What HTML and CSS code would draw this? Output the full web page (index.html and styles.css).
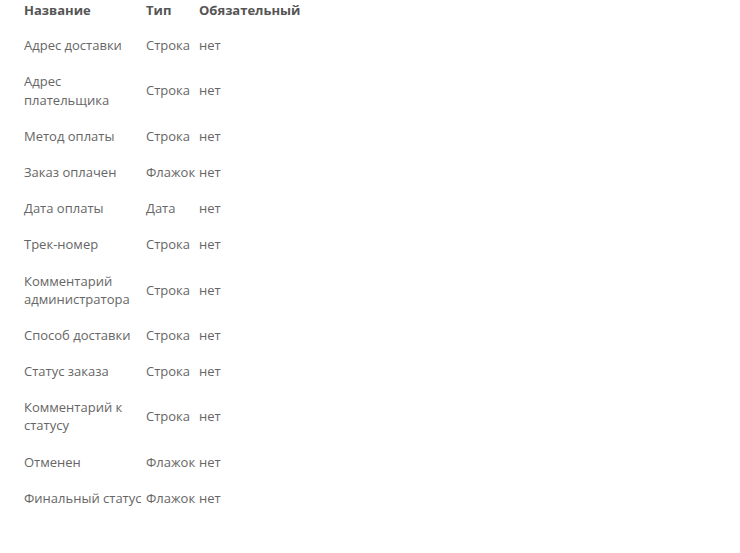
FILE: index.html
```html
<!DOCTYPE html>
<html lang="ru">
<head>
<meta charset="utf-8">
<link rel="stylesheet" href="styles.css">
</head>
<body>
<div class="wrap">
<table class="fields">
<colgroup><col class="c1"><col class="c2"><col class="c3"></colgroup>
<thead>
<tr><th>Название</th><th>Тип</th><th>Обязательный</th></tr>
</thead>
<tbody>
<tr><td>Адрес доставки</td><td>Строка</td><td>нет</td></tr>
<tr><td>Адрес плательщика</td><td>Строка</td><td>нет</td></tr>
<tr><td>Метод оплаты</td><td>Строка</td><td>нет</td></tr>
<tr><td>Заказ оплачен</td><td>Флажок</td><td>нет</td></tr>
<tr><td>Дата оплаты</td><td>Дата</td><td>нет</td></tr>
<tr><td>Трек-номер</td><td>Строка</td><td>нет</td></tr>
<tr><td>Комментарий администратора</td><td>Строка</td><td>нет</td></tr>
<tr><td>Способ доставки</td><td>Строка</td><td>нет</td></tr>
<tr><td>Статус заказа</td><td>Строка</td><td>нет</td></tr>
<tr><td>Комментарий к статусу</td><td>Строка</td><td>нет</td></tr>
<tr><td>Отменен</td><td>Флажок</td><td>нет</td></tr>
<tr><td>Финальный статус</td><td>Флажок</td><td>нет</td></tr>
</tbody>
</table>
</div>
</body>
</html>
```
FILE: styles.css
```css
html, body {
  margin: 0;
  padding: 0;
  background: #fff;
}
.wrap {
  padding: 0 0 0 22px;
  font-family: "Open Sans", "Liberation Sans", sans-serif;
  font-size: 13px;
  line-height: 1.4;
  color: #666;
}
.fields {
  border-collapse: collapse;
  table-layout: fixed;
  width: 330px;
}
.c1 { width: 122px; }
.c2 { width: 53px; }
.c3 { width: 155px; }
.fields th {
  text-align: left;
  font-weight: 700;
  color: #555;
  padding: 1px 2px 8px;
  vertical-align: middle;
  white-space: nowrap;
}
.fields td {
  padding: 9px 2px;
  vertical-align: middle;
}
```
